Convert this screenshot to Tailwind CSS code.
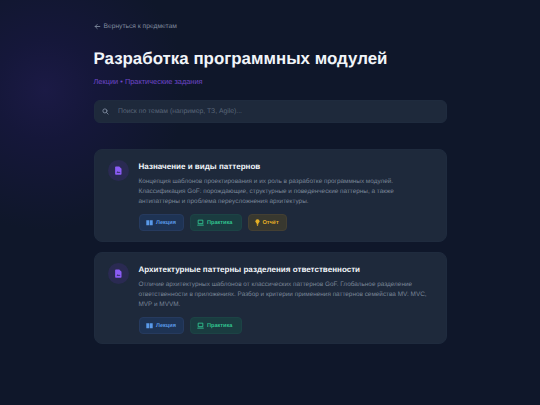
<!DOCTYPE html>
<html>
<head>
    <meta charset="utf-8">
    <title>Разработка программных модулей</title>
    <script src="https://cdn.jsdelivr.net/npm/@tailwindcss/browser@4"></script>
</head>
<body class="bg-[#0f172a]">
    <div class="h-[405px] w-[540px] overflow-hidden bg-[radial-gradient(circle_at_45px_90px,#1b1a45_0%,#15173a_50px,#0f172a_140px)] font-['Liberation_Sans',sans-serif] [text-rendering:geometricPrecision]">
        <main class="mx-auto w-[353px] pt-[21px]">
            <a class="flex h-[10px] items-center gap-[3px] text-[6.7px] leading-[10px] text-[#808c9f]">
                <svg class="h-[7px] w-[7px]" viewBox="0 0 24 24" fill="none" stroke="currentColor" stroke-width="3" stroke-linecap="round" stroke-linejoin="round"><path d="M20 12H4M11 5l-7 7 7 7"/></svg>
                <span class="pt-[1px]">Вернуться к предметам</span>
            </a>

            <h1 class="mt-[16px] text-[16.9px] leading-[24px] font-bold text-[#f1f5f9]">Разработка программных модулей</h1>
            <p class="mt-[4.5px] text-[7.4px] leading-[11px] text-[#6d46c8]">Лекции • Практические задания</p>

            <div class="mt-[13.5px] flex h-[23px] items-center gap-[9px] rounded-[6px] border border-[#1f2b3e] bg-[#1e293b] pl-[7.5px]">
                <svg class="h-[7px] w-[7px] text-[#7f8ca0]" viewBox="0 0 24 24" fill="none" stroke="currentColor" stroke-width="3" stroke-linecap="round"><circle cx="10" cy="10" r="7"/><path d="M15.5 15.5L21 21"/></svg>
                <span class="pt-[2px] text-[6.8px] text-[#5a6679]">Поиск по темам (например, ТЗ, Agile)...</span>
            </div>

            <section class="mt-[26px] flex flex-col gap-[10px]">
                <article class="flex h-[93px] gap-[10px] rounded-[8px] border border-[#1f2b3e] bg-[#1e293b] pt-[10px] pl-[13px]">
                    <div class="flex h-[21px] w-[21px] shrink-0 items-center justify-center rounded-full bg-[#2a2a52]">
                        <svg class="h-[9px] w-[9px] text-[#8b5cf6]" viewBox="0 0 24 24" fill="currentColor"><path d="M5 1h9l6 6v14a2 2 0 0 1-2 2H5a2 2 0 0 1-2-2V3a2 2 0 0 1 2-2z"/><path d="M7 17l3-3 2 2 2-1 3 2v1H7z" fill="#2a2a52"/></svg>
                    </div>
                    <div class="w-[292px] pt-[1px]">
                        <h2 class="text-[8.05px] leading-[12px] font-bold text-[#f1f5f9]">Назначение и виды паттернов</h2>
                        <p class="mt-[3.6px] text-[6.4px] leading-[10.2px] text-[#7a8698]">Концепция шаблонов проектирования и их роль в разработке программных модулей. Классификация GoF: порождающие, структурные и поведенческие паттерны, а также антипаттерны и проблема переусложнения архитектуры.</p>
                        <div class="mt-[6.8px] flex gap-[6px]">
                            <span class="flex h-[17px] w-[45px] items-center gap-[3px] rounded-[4px] border border-[#263a5e] bg-[#1e3354] pl-[6.5px] text-[5.6px] font-bold text-[#60a5fa]/90">
                                <svg class="h-[7px] w-[7px] shrink-0" viewBox="0 0 24 24" fill="currentColor"><path d="M1 4h10v17H1zM13 4h10v17H13z"/></svg><span class="pt-[1.5px]">Лекция</span>
                            </span>
                            <span class="flex h-[17px] w-[52px] items-center gap-[3px] rounded-[4px] border border-[#1c4345] bg-[#1a3c40] pl-[6.5px] text-[5.6px] font-bold text-[#34d399]/90">
                                <svg class="h-[7px] w-[7px] shrink-0" viewBox="0 0 24 24" fill="none" stroke="currentColor" stroke-width="3"><path d="M4 4h16v12H4zM1 21h22"/></svg><span class="pt-[1.5px]">Практика</span>
                            </span>
                            <span class="flex h-[17px] w-[39px] items-center gap-[2px] rounded-[4px] border border-[#433f33] bg-[#38382f] pl-[5px] text-[5.6px] font-bold text-[#fbbf24]/90">
                                <svg class="h-[7px] w-[7px] shrink-0" viewBox="0 0 24 24" fill="currentColor"><circle cx="12" cy="8" r="7"/><path d="M9 14h6v5H9zM10 20h4v3h-4z"/></svg><span class="pt-[1.5px]">Отчёт</span>
                            </span>
                        </div>
                    </div>
                </article>

                <article class="flex h-[92px] gap-[10px] rounded-[8px] border border-[#1f2b3e] bg-[#1e293b] pt-[10px] pl-[13px]">
                    <div class="flex h-[21px] w-[21px] shrink-0 items-center justify-center rounded-full bg-[#2a2a52]">
                        <svg class="h-[9px] w-[9px] text-[#8b5cf6]" viewBox="0 0 24 24" fill="currentColor"><path d="M5 1h9l6 6v14a2 2 0 0 1-2 2H5a2 2 0 0 1-2-2V3a2 2 0 0 1 2-2z"/><path d="M7 17l3-3 2 2 2-1 3 2v1H7z" fill="#2a2a52"/></svg>
                    </div>
                    <div class="w-[292px] pt-[1px]">
                        <h2 class="text-[8.05px] leading-[12px] font-bold text-[#f1f5f9]">Архитектурные паттерны разделения ответственности</h2>
                        <p class="mt-[3.6px] text-[6.4px] leading-[10.2px] text-[#7a8698]">Отличие архитектурных шаблонов от классических паттернов GoF. Глобальное разделение ответственности в приложениях. Разбор и критерии применения паттернов семейства MV: MVC, MVP и MVVM.</p>
                        <div class="mt-[6.8px] flex gap-[6px]">
                            <span class="flex h-[17px] w-[45px] items-center gap-[3px] rounded-[4px] border border-[#263a5e] bg-[#1e3354] pl-[6.5px] text-[5.6px] font-bold text-[#60a5fa]/90">
                                <svg class="h-[7px] w-[7px] shrink-0" viewBox="0 0 24 24" fill="currentColor"><path d="M1 4h10v17H1zM13 4h10v17H13z"/></svg><span class="pt-[1.5px]">Лекция</span>
                            </span>
                            <span class="flex h-[17px] w-[52px] items-center gap-[3px] rounded-[4px] border border-[#1c4345] bg-[#1a3c40] pl-[6.5px] text-[5.6px] font-bold text-[#34d399]/90">
                                <svg class="h-[7px] w-[7px] shrink-0" viewBox="0 0 24 24" fill="none" stroke="currentColor" stroke-width="3"><path d="M4 4h16v12H4zM1 21h22"/></svg><span class="pt-[1.5px]">Практика</span>
                            </span>
                        </div>
                    </div>
                </article>
            </section>
        </main>
    </div>
</body>
</html>
